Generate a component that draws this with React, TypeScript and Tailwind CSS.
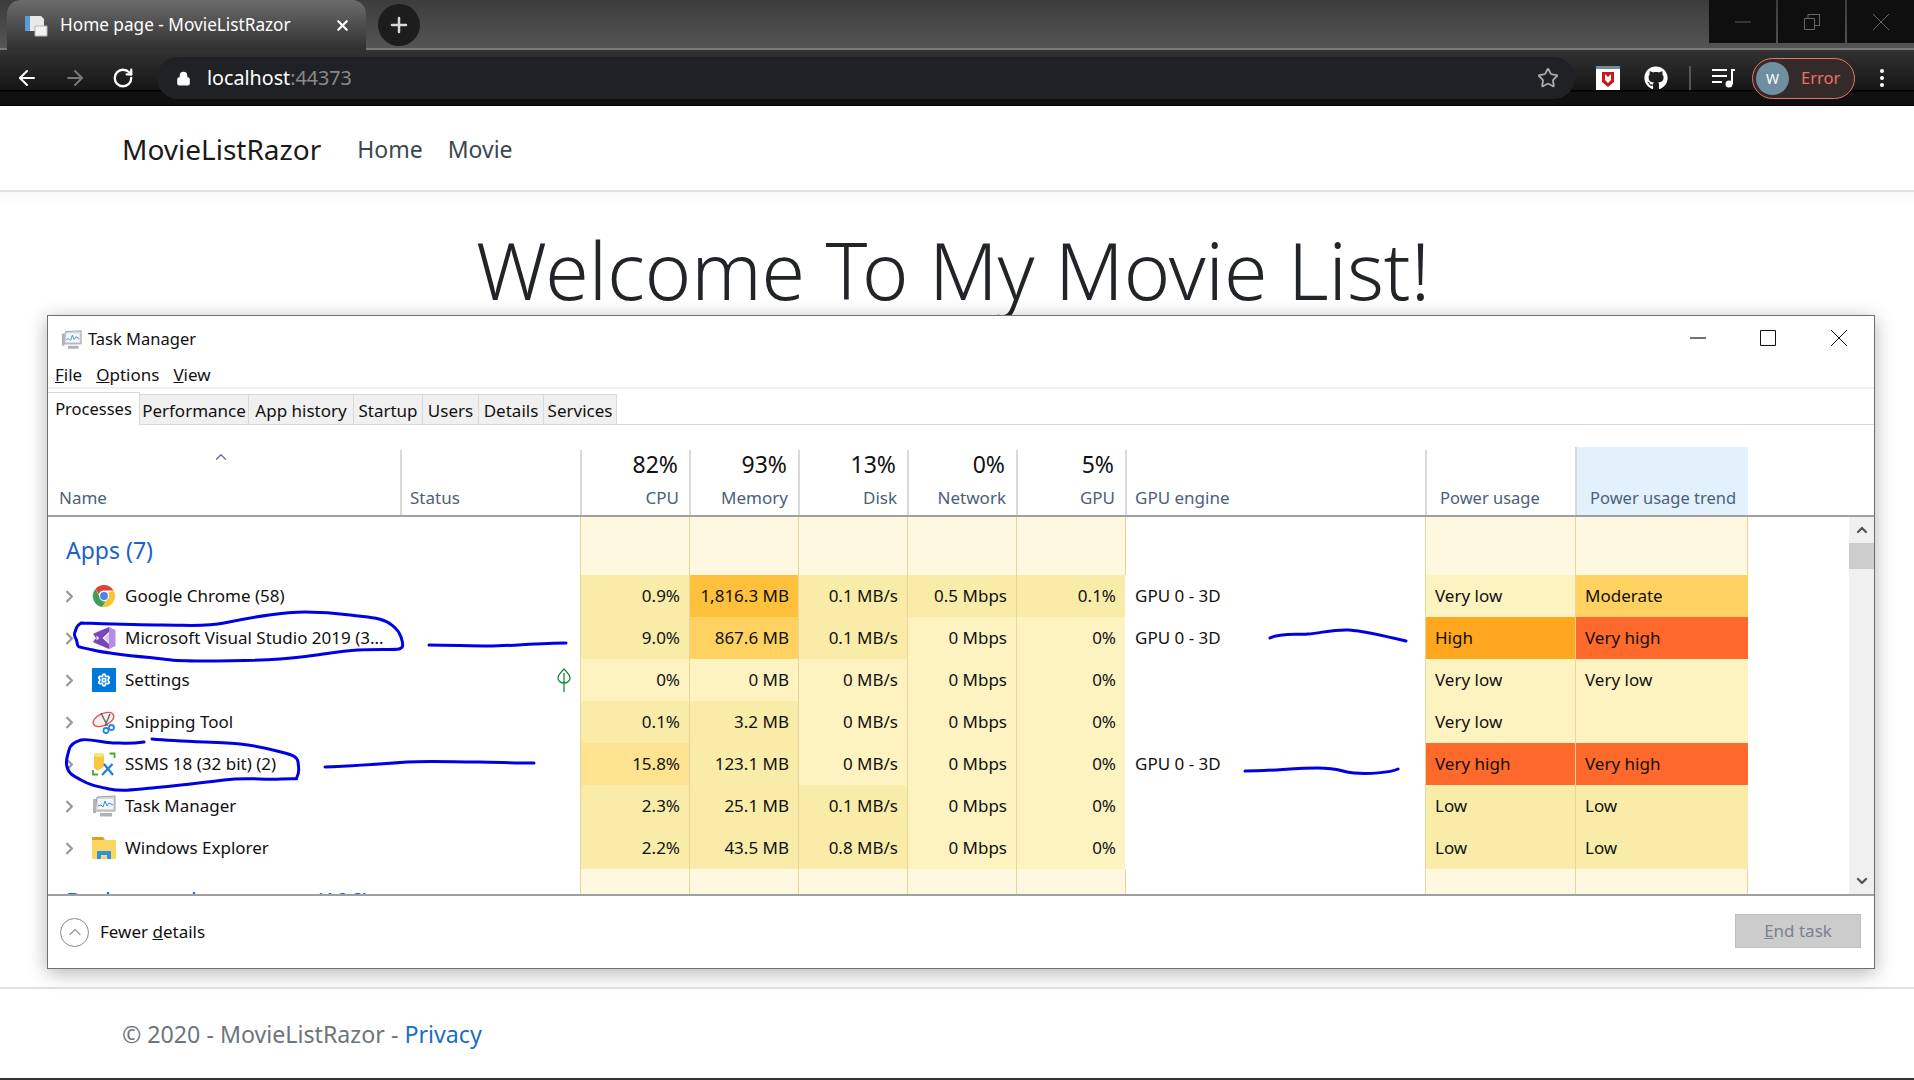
import React from 'react';
import { ChevronRight, ChevronUp, ChevronDown, Settings, Star, Plus, X, ArrowLeft, ArrowRight, RotateCw, Lock } from 'lucide-react';
import { FaGithub } from 'react-icons/fa';

type Level = 'light' | 'low' | 'warm' | 'mid' | 'strong' | 'high' | 'max';

const levelBg: Record<Level, string> = {
  light: 'bg-[#fdf3c1]',
  low: 'bg-[#f9eca8]',
  warm: 'bg-[#fde290]',
  mid: 'bg-[#ffd160]',
  strong: 'bg-[#ffc13b]',
  high: 'bg-[#ffa71e]',
  max: 'bg-[#ff692b]',
};

type Cell = [string, Level];

type Proc = {
  name: string;
  icon: React.ReactNode;
  leaf?: boolean;
  cpu: Cell;
  mem: Cell;
  disk: Cell;
  net: Cell;
  gpu: Cell;
  engine: string;
  power: Cell;
  trend: Cell;
};

const ChromeIcon = () => (
  <svg width="24" height="24" viewBox="0 0 24 24">
    <path d="M12 1a11 11 0 0 1 9.500 5.500H12a5.500 5.500 0 0 0-5.200 3.700L3.400 5A11 11 0 0 1 12 1z" fill="#db4437" />
    <path d="M3.400 5l4.700 8.600a5 5 0 0 0 5.600 3.800L10.400 23A11 11 0 0 1 3.400 5z" fill="#3f9f5a" />
    <path d="M21.500 6.500A11 11 0 0 1 10.400 23l4.800-7.800a5 5 0 0 0 .5-6.200z" fill="#f6c637" />
    <circle cx="12" cy="12" r="5" fill="#f3f3f3" />
    <circle cx="12" cy="12" r="3.900" fill="#4a86e8" />
  </svg>
);

const VsIcon = () => (
  <svg width="24" height="24" viewBox="0 0 24 24">
    <path d="M17 1l6.500 3v16L17 23z" fill="#b48be6" />
    <path d="M4 6.500L17 1v5l-6.500 6 6.500 6v5L4 17.500 1 16l3-4-3-4z" fill="#7a45b8" />
    <path d="M4.500 9.500v5l2.800-2.500z" fill="#f3ecfa" />
    <path d="M17 7.500v9L12 12z" fill="#d9c4f2" />
  </svg>
);

const SettingsIcon = () => (
  <div className="flex h-6 w-6 items-center justify-center bg-[#0078d7]">
    <Settings size={14} color="#fff" strokeWidth={3} />
  </div>
);

const SnipIcon = () => (
  <svg width="24" height="24" viewBox="0 0 24 24" fill="none">
    <ellipse cx="11.500" cy="9.500" rx="11" ry="6" transform="rotate(-25 11.500 9.500)" fill="#f7eeee" stroke="#e2555c" strokeWidth="1.400" />
    <path d="M9 3l6.500 13M18 4l-5 12" stroke="#666" strokeWidth="1.400" />
    <circle cx="14" cy="20.500" r="2.500" stroke="#2a86d0" strokeWidth="1.800" />
    <circle cx="19.500" cy="17.500" r="2.500" stroke="#2a86d0" strokeWidth="1.800" />
  </svg>
);

const SsmsIcon = () => (
  <svg width="24" height="24" viewBox="0 0 24 24" fill="none">
    <path d="M2 3c0-2.800 10-2.800 10 0v11c0 1.500-2 2.500-4 3l-2 1.500C4 18 2 16.500 2 15z" fill="#f6c93c" />
    <ellipse cx="7" cy="3" rx="5" ry="2" fill="#fbe27e" />
    <path d="M17.500 1.500h5v4.500M1 18v4.500h5" stroke="#4ea13a" strokeWidth="1.800" />
    <path d="M10 23l10.500-11M12 12l9 11" stroke="#1f7fd0" strokeWidth="2.200" />
  </svg>
);

const TaskMgrIcon = ({ size = 24 }: { size?: number }) => (
  <svg width={size} height={size} viewBox="0 0 24 24" fill="none">
    <path d="M3 17l2-14 18-1v15z" fill="#d5d9de" stroke="#9a9fa5" strokeWidth="1" />
    <path d="M6 5h15v10H6z" fill="#f4f8fc" />
    <path d="M6 12l3-1 2 2 2-6 2 5 2-3 4 2" stroke="#3b8ed0" strokeWidth="1" />
    <path d="M8 19h12v3.500H8zM1 5h3v14H1z" fill="#b0b4b8" />
  </svg>
);

const ExplorerIcon = () => (
  <svg width="24" height="24" viewBox="0 0 24 24">
    <path d="M0 1h11l2 3H0z" fill="#e0a019" />
    <path d="M0 4h24v19H0z" fill="#fbd760" />
    <path d="M5 15h14v8h-4v-4H9v4H5z" fill="#2f8fe0" />
  </svg>
);

const procs: Proc[] = [
  { name: 'Google Chrome (58)', icon: <ChromeIcon />, cpu: ['0.9%', 'low'], mem: ['1,816.3 MB', 'strong'], disk: ['0.1 MB/s', 'low'], net: ['0.5 Mbps', 'low'], gpu: ['0.1%', 'low'], engine: 'GPU 0 - 3D', power: ['Very low', 'light'], trend: ['Moderate', 'mid'] },
  { name: 'Microsoft Visual Studio 2019 (3...', icon: <VsIcon />, cpu: ['9.0%', 'low'], mem: ['867.6 MB', 'mid'], disk: ['0.1 MB/s', 'low'], net: ['0 Mbps', 'light'], gpu: ['0%', 'light'], engine: 'GPU 0 - 3D', power: ['High', 'high'], trend: ['Very high', 'max'] },
  { name: 'Settings', icon: <SettingsIcon />, leaf: true, cpu: ['0%', 'light'], mem: ['0 MB', 'light'], disk: ['0 MB/s', 'light'], net: ['0 Mbps', 'light'], gpu: ['0%', 'light'], engine: '', power: ['Very low', 'light'], trend: ['Very low', 'light'] },
  { name: 'Snipping Tool', icon: <SnipIcon />, cpu: ['0.1%', 'low'], mem: ['3.2 MB', 'low'], disk: ['0 MB/s', 'light'], net: ['0 Mbps', 'light'], gpu: ['0%', 'light'], engine: '', power: ['Very low', 'light'], trend: ['', 'light'] },
  { name: 'SSMS 18 (32 bit) (2)', icon: <SsmsIcon />, cpu: ['15.8%', 'warm'], mem: ['123.1 MB', 'low'], disk: ['0 MB/s', 'light'], net: ['0 Mbps', 'light'], gpu: ['0%', 'light'], engine: 'GPU 0 - 3D', power: ['Very high', 'max'], trend: ['Very high', 'max'] },
  { name: 'Task Manager', icon: <TaskMgrIcon />, cpu: ['2.3%', 'low'], mem: ['25.1 MB', 'low'], disk: ['0.1 MB/s', 'low'], net: ['0 Mbps', 'light'], gpu: ['0%', 'light'], engine: '', power: ['Low', 'low'], trend: ['Low', 'low'] },
  { name: 'Windows Explorer', icon: <ExplorerIcon />, cpu: ['2.2%', 'low'], mem: ['43.5 MB', 'low'], disk: ['0.8 MB/s', 'low'], net: ['0 Mbps', 'light'], gpu: ['0%', 'light'], engine: '', power: ['Low', 'low'], trend: ['Low', 'low'] },
];

const tabs = [
  { label: 'Performance', w: 'w-[109px]' },
  { label: 'App history', w: 'w-[105px]' },
  { label: 'Startup', w: 'w-[69px]' },
  { label: 'Users', w: 'w-[56px]' },
  { label: 'Details', w: 'w-[65px]' },
  { label: 'Services', w: 'w-[73px]' },
];

const usage = [
  { pct: '82%', label: 'CPU' },
  { pct: '93%', label: 'Memory' },
  { pct: '13%', label: 'Disk' },
  { pct: '0%', label: 'Network' },
  { pct: '5%', label: 'GPU' },
];

const sep = 'border-l border-[#e9d49c]';

const NumCell = ({ cell }: { cell: Cell }) => (
  <div className={`w-[109px] shrink-0 pr-[9px] text-right ${sep} ${levelBg[cell[1]]}`}>{cell[0]}</div>
);

const EmptyCells = () => (
  <>
    {usage.map((u) => (
      <div key={u.label} className={`w-[109px] shrink-0 bg-[#fef8e1] ${sep}`} />
    ))}
    <div className={`w-[300px] shrink-0 ${sep}`} />
    <div className={`w-[150px] shrink-0 bg-[#fef8e1] ${sep}`} />
    <div className={`w-[173px] shrink-0 border-r bg-[#fef8e1] ${sep}`} />
  </>
);

const BrowserChrome = () => (
  <>
    <div className="flex h-[50px] bg-[linear-gradient(#3c3c3c,#545454_48px,#7a7a7a_48px)]">
      <div className="ml-[7px] flex h-[50px] w-[359px] items-center rounded-t-[14px] bg-[linear-gradient(#6c6c6c,#2f2f2f)] pl-[17px] text-[17.200px] text-white">
        <svg width="24" height="24" viewBox="0 0 24 24">
          <path d="M1 3h16l3 3v12H1z" fill="#e8e8e8" />
          <path d="M1 3h5v15H1z" fill="#5b9bd5" />
          <path d="M11 13h12v10H11z" fill="#f2f2f2" stroke="#b5b5b5" />
        </svg>
        <span className="ml-3 w-[274px] whitespace-nowrap">Home page - MovieListRazor</span>
        <X size={17} color="#fff" strokeWidth={3} />
      </div>
      <div className="ml-3 mt-1 flex h-[42px] w-[42px] items-center justify-center rounded-full bg-[#1d1d1d]">
        <Plus size={24} color="#d8d8d8" strokeWidth={2.5} />
      </div>
      <div className="ml-auto flex h-[43px] gap-[2px]">
        <div className="flex w-[67px] items-center justify-center bg-[#0f0f0f]">
          <svg width="16" height="16" viewBox="0 0 16 16"><path d="M0 8h16" stroke="#5a5a5a" /></svg>
        </div>
        <div className="flex w-[67px] items-center justify-center bg-[#0f0f0f]">
          <svg width="16" height="16" viewBox="0 0 16 16" fill="none" stroke="#666"><path d="M.5 4.500h10v11H.5zM4 4V.5h11.500v11H11" /></svg>
        </div>
        <div className="flex w-[67px] items-center justify-center bg-[#0f0f0f]">
          <svg width="16" height="16" viewBox="0 0 16 16"><path d="M0 0l16 16M16 0L0 16" stroke="#666" /></svg>
        </div>
      </div>
    </div>
    <div className="flex h-[56px] bg-[linear-gradient(#323232,#161616_40px,#000_40px,#000_41px,#111_42px,#0e0e0e_55px,#000_55px)] pt-[7px]">
      <div className="flex h-[42px] w-full items-center">
        <ArrowLeft size={24} color="#fff" strokeWidth={2} className="ml-[15px]" />
        <ArrowRight size={24} color="#777" strokeWidth={2} className="ml-6" />
        <RotateCw size={22} color="#fff" strokeWidth={2.5} className="ml-[25px]" />
        <div className="ml-[23px] flex h-[42px] w-[1418px] shrink-0 items-center rounded-full bg-[#202124] pl-[19px] pr-[16px] text-[19.700px]">
          <Lock size={15} color="#fff" fill="#fff" />
          <span className="ml-[16px] text-white">localhost</span>
          <span className="text-[#8a8a8a]">:44373</span>
          <Star size={22} color="#aaa" strokeWidth={2} className="ml-auto" />
        </div>
        <div className="ml-[21px] flex h-6 w-6 flex-col bg-white">
          <div className="h-[3px] bg-[#6f8e9f]" />
          <svg width="24" height="21" viewBox="0 0 24 21"><path d="M6 3h12v10l-6 5-6-5zM9 5v6l3 3 3-3V5l-3 3z" fill="#c8171f" fillRule="evenodd" /></svg>
        </div>
        <FaGithub size={24} color="#fff" className="ml-6" />
        <div className="ml-[21px] h-6 w-[2px] bg-[#555]" />
        <svg width="24" height="20" viewBox="0 0 24 20" fill="#fff" className="ml-[21px]">
          <path d="M0 1h15v2H0zM0 7h15v2H0zM0 13h10v2H0z" />
          <circle cx="17" cy="16" r="3.500" />
          <path d="M19 1h4v2h-2v13h-2z" />
        </svg>
        <div className="ml-4 flex h-[41px] w-[103px] shrink-0 items-center rounded-full border border-[#e8756e] bg-[#352a2a] pl-[3px] text-[16.500px] text-[#ee6f64]">
          <div className="flex h-[33px] w-[33px] items-center justify-center rounded-full bg-[#6f8e9f] text-[14px] text-white">W</div>
          <span className="ml-[12px]">Error</span>
        </div>
        <div className="ml-[25px] flex flex-col gap-[3px]">
          <div className="h-1 w-1 rounded-full bg-white" />
          <div className="h-1 w-1 rounded-full bg-white" />
          <div className="h-1 w-1 rounded-full bg-white" />
        </div>
      </div>
    </div>
  </>
);

const Scribbles = () => (
  <svg className="pointer-events-none absolute left-0 top-0" width="1914" height="1080" fill="none" stroke="#0000e6" strokeWidth="3" strokeLinecap="round" strokeLinejoin="round">
    <path d="M81 623C110 624 135 625 162 625S205 627 224 623 255 617 269 615 290 612 305 612 335 613 350 615 370 617 379 619 398 628 401 637 403 648 399 649 375 649 358 650 325 654 301 657 240 661 203 661 175 660 154 658 110 654 93 650 78 648 77 642 73 637 75 632 76 626 81 623Z" />
    <path d="M429 645C450 645 470 646 489 646S540 643 566 643" />
    <path d="M144 742C130 744 122 743 113 743S88 738 81 740 70 745 69 750 65 760 67 767 72 775 81 780 95 786 109 789 140 789 162 787 200 783 224 780 260 780 281 779 295 780 297 777 299 768 298 762 292 755 281 752 258 746 240 744 185 742 152 739" />
    <path d="M325 767C350 766 380 764 407 762S490 763 534 763" />
    <path d="M1270 638C1280 633 1295 635 1308 634S1335 629 1349 630 1385 636 1406 641" />
    <path d="M1245 771C1270 771 1295 768 1318 768S1340 772 1354 773 1390 773 1398 769" />
  </svg>
);

const TaskManager = () => (
  <div className="absolute left-[47px] top-[315px] flex h-[654px] w-[1828px] flex-col border border-[#707070] bg-white text-[17px] text-[#111] shadow-[0_4px_18px_rgba(0,0,0,0.3)]">
    <div className="flex h-[46px] shrink-0 items-center pl-[13px]">
      <TaskMgrIcon size={21} />
      <span className="ml-[6px] whitespace-nowrap text-[16.500px]">Task Manager</span>
      <div className="ml-auto flex items-center gap-[54px] pb-[2px] pr-[26px]">
        <svg width="16" height="16" viewBox="0 0 16 16"><path d="M0 8h16" stroke="#111" strokeWidth="1.200" /></svg>
        <svg width="16" height="16" viewBox="0 0 16 16" fill="none"><path d="M.5.5h15v15H.5z" stroke="#111" /></svg>
        <svg width="18" height="16" viewBox="0 0 18 16"><path d="M1 0l16 16M17 0L1 16" stroke="#111" /></svg>
      </div>
    </div>
    <div className="flex h-[27px] shrink-0 items-center gap-[14px] border-b-2 border-[#f0f0f0] pl-[7px]">
      <span><span className="underline">F</span>ile</span>
      <span><span className="underline">O</span>ptions</span>
      <span><span className="underline">V</span>iew</span>
    </div>
    <div className="flex h-[36px] shrink-0 items-end border-b border-[#d9d9d9]">
      <div className="-mb-px flex h-[33px] w-[92px] items-center justify-center border-r border-t border-[#d9d9d9] bg-white text-[16.500px]">Processes</div>
      {tabs.map((t) => (
        <div key={t.label} className={`flex h-[30px] items-center justify-center border-r border-t border-[#d9d9d9] bg-[#f0f0f0] pt-[2px] ${t.w}`}>{t.label}</div>
      ))}
    </div>
    <div className="flex h-[92px] shrink-0 items-end border-b-2 border-[#a0a0a0] text-[#4c607a]">
      <div className="h-[65px] w-[352px] shrink-0 pl-[11px]">
        <div className="flex h-[30px] items-start pl-[153px]"><ChevronUp size={18} color="#5a6a85" strokeWidth={1.500} className="-mt-[2px]" /></div>
        <div className="leading-[35px]">Name</div>
      </div>
      <div className="h-[65px] w-[180px] shrink-0 border-l-2 border-[#d9d9d9] pl-[8px] pt-[30px] leading-[35px]">Status</div>
      {usage.map((u) => (
        <div key={u.label} className="h-[65px] w-[109px] shrink-0 border-l-2 border-[#d9d9d9] pr-[10px] text-right">
          <div className="h-[30px] pr-px text-[23px] leading-[28px] text-[#111]">{u.pct}</div>
          <div className="leading-[35px]">{u.label}</div>
        </div>
      ))}
      <div className="h-[65px] w-[300px] shrink-0 border-l-2 border-[#d9d9d9] pl-[8px] pt-[30px] leading-[35px]">GPU engine</div>
      <div className="h-[65px] w-[150px] shrink-0 border-l-2 border-[#d9d9d9] pl-[13px] pt-[30px] text-[16.500px] leading-[35px]">Power usage</div>
      <div className="h-[68px] w-[173px] shrink-0 border-l-2 border-[#d9d9d9] bg-[#e3f1fc] pl-[13px] pt-[33px] text-[16.500px] leading-[35px] whitespace-nowrap">Power usage trend</div>
    </div>
    <div className="flex h-[379px] shrink-0 border-b-2 border-[#a0a0a0]">
      <div className="min-w-0 flex-1 overflow-hidden">
        <div className="flex h-[58px]">
          <div className="flex w-[532px] shrink-0 items-center pl-[18px] pt-[9px] text-[23px] text-[#1e60c8]">Apps (7)</div>
          <EmptyCells />
        </div>
        {procs.map((p) => (
          <div key={p.name} className="flex h-[42px] leading-[42px]">
            <div className="flex w-[352px] shrink-0 items-center whitespace-nowrap pl-[12px]">
              <ChevronRight size={19} color="#999" strokeWidth={3} />
              <div className="ml-[13px] w-6">{p.icon}</div>
              <span className="ml-[9px]">{p.name}</span>
            </div>
            <div className="flex w-[180px] shrink-0 items-center justify-end pr-[9px]">
              {p.leaf && (
                <svg width="14" height="24" viewBox="0 0 14 24" fill="none" stroke="#128a3c" strokeWidth="1.300"><path d="M7 1C3 5 1 8 1 10c0 3 3 5 6 5s6-2 6-5c0-2-2-5-6-9zM7 5v19" /></svg>
              )}
            </div>
            <NumCell cell={p.cpu} />
            <NumCell cell={p.mem} />
            <NumCell cell={p.disk} />
            <NumCell cell={p.net} />
            <NumCell cell={p.gpu} />
            <div className="w-[300px] shrink-0 pl-[10px]">{p.engine}</div>
            <div className={`w-[150px] shrink-0 pl-[9px] ${sep} ${levelBg[p.power[1]]}`}>{p.power[0]}</div>
            <div className={`w-[173px] shrink-0 pl-[9px] ${sep} ${levelBg[p.trend[1]]}`}>{p.trend[0]}</div>
          </div>
        ))}
        <div className="flex h-[25px]">
          <div className="h-[25px] w-[532px] shrink-0 overflow-hidden pl-[18px] pt-[17px] text-[23px] leading-[30px] text-[#1e60c8] whitespace-nowrap">Background processes (106)</div>
          <EmptyCells />
        </div>
      </div>
      <div className="flex w-[25px] shrink-0 flex-col items-center bg-[#f0f0f0]">
        <div className="flex h-[26px] items-center"><ChevronUp size={16} color="#555" strokeWidth={3.500} /></div>
        <div className="h-[26px] w-full bg-[#cdcdcd]" />
        <div className="mt-auto flex h-[26px] items-center"><ChevronDown size={16} color="#555" strokeWidth={3.500} /></div>
      </div>
    </div>
    <div className="flex flex-1 items-center pl-[12px] pr-[13px]">
      <div className="flex h-[29px] w-[29px] items-center justify-center rounded-full border border-[#8a8a8a]">
        <ChevronUp size={20} color="#999" strokeWidth={1.500} />
      </div>
      <span className="ml-[11px]">Fewer <span className="underline">d</span>etails</span>
      <div className="mb-[3px] ml-auto flex h-[34px] w-[126px] items-center justify-center border border-[#bfbfbf] bg-[#cccccc] text-[#7c8090]">
        <span><span className="underline">E</span>nd task</span>
      </div>
    </div>
  </div>
);

const App: React.FC = () => {
  return (
    <div className="relative h-[1080px] w-[1914px] overflow-hidden bg-white font-['Noto_Sans','Open_Sans',sans-serif]">
      <BrowserChrome />
      <div className="flex h-[86px] items-center border-b-2 border-[#dee2e6] pl-[122px] pt-[2px] text-[23px] text-[#3c4650]">
        <span className="text-[28px] text-[#1a1a1a]">MovieListRazor</span>
        <span className="ml-[36px]">Home</span>
        <span className="ml-[25px]">Movie</span>
      </div>
      <div className="h-[795px] bg-[linear-gradient(#f8f9fa,#fff_14px)] pr-[8px] pt-[30px] text-center">
        <h1 className="text-[78.800px] font-light leading-[96px] text-[#212529]">Welcome To My Movie List!</h1>
      </div>
      <div className="flex h-[93px] items-center border-t-2 border-b-2 border-t-[#dee2e6] border-b-[#333] pl-[122px] pt-[2px] text-[23.200px] text-[#6c757d]">
        <span>© 2020 - MovieListRazor - <span className="text-[#1b6ec2]">Privacy</span></span>
      </div>
      <TaskManager />
      <Scribbles />
    </div>
  );
};

export default App;
